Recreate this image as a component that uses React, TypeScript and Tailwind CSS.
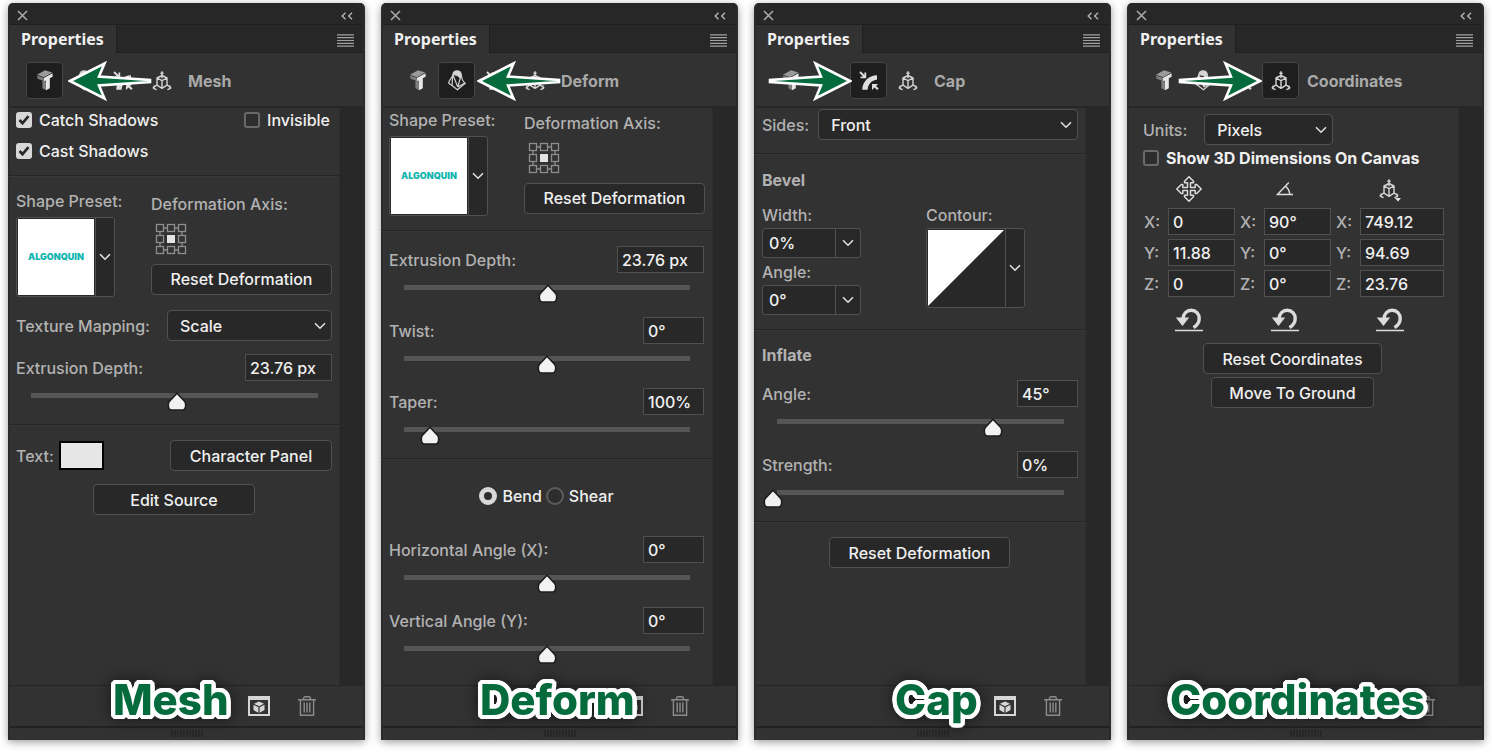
import { useId, useState } from "react";
import type { ReactNode } from "react";

/* ---------- icons ---------- */

function ExtrudeIcon() {
  return (
    <svg width="16" height="21" viewBox="0 0 16 21" aria-hidden="true">
      <path d="M0 4.8 8 .3l7.3 2.2L7 7.2Z" fill="#9a9a9a" />
      <path d="M0 5.4 6.6 7.8v3.3L.6 8.8Z" fill="#7d7d7d" />
      <path d="M5.4 10.8 9 11.6v8.7l-3.6-2Z" fill="#7d7d7d" />
      <path d="M6.8 7.9 15.6 3.2v3.5l-2.8 1.5v10L9 20.3v-9.9l-2.2.9Z" fill="#e6e6e6" />
    </svg>
  );
}

function DeformIcon() {
  return (
    <svg width="18" height="21" viewBox="0 0 18 21" fill="none" stroke="#d0d0d0" strokeWidth="1.2" strokeLinejoin="round" aria-hidden="true">
      <path d="M4.8 4.5C5.3 1.700 7 .8 9 .8c2.300 0 4 1.300 4.300 3.700L12 7.500 9.500 5.500Z" fill="#d6d6d6" />
      <path d="M4.800 4.500C4.500 8 .9 9.500.7 13.200L4 15.500l5.400 4.300 7.900-6.600C14.500 11.500 13.600 9 13.300 4.500" />
      <path d="M4.800 4.500 4 15.500M4.800 4.500 9.800 17M9.800 17l3.500-12.500M9.800 17l7-4" />
    </svg>
  );
}

function CapIcon() {
  return (
    <svg width="20" height="20" viewBox="0 0 20 20" aria-hidden="true">
      <path d="M3.200 18.800C3.600 10.500 9.500 4.400 18 4.200v4.600C12.800 9.200 9 13 8.600 18.800Z" fill="#dedede" />
      <path d="M1 1l4.500 4.500M6.300 1.600v4.700H1.600" fill="none" stroke="#dedede" strokeWidth="1.800" />
      <path d="M13 13h6l-1.900 1.900 2.600 2.600-1.600 1.600-2.600-2.600L13 19Z" fill="#dedede" />
    </svg>
  );
}

function AxisCubeIcon() {
  return (
    <svg width="20" height="20" viewBox="0 0 20 20" fill="none" stroke="#d6d6d6" strokeWidth="1.400" strokeLinejoin="round" aria-hidden="true">
      <path d="M10 4.500 15 7v7.200L10 17.300 5 14.200V7ZM5 7l5 2.600L15 7M10 9.600v7.700" />
      <path d="M10 .3v7M5 13.800.7 17.200M15 13.800l4.300 3.400M2 14.500v3.200l2.600 1M18 14.500v3.200l-2.600 1M8.400 2.200h3.200" />
    </svg>
  );
}

function MoveIcon() {
  return (
    <svg width="26" height="26" viewBox="0 0 26 26" fill="none" stroke="#dcdcdc" strokeWidth="1.500" strokeLinejoin="round" aria-hidden="true">
      <path d="m13 .8 4.500 4.500v1.500h-3v4.700h4.700v-3h1.500l4.500 4.500-4.500 4.500h-1.500v-3h-4.700v4.700h3v1.500L13 25.200l-4.500-4.500v-1.500h3v-4.700H6.800v3H5.300L.8 13l4.500-4.500h1.500v3h4.700V6.800h-3V5.300Z" />
    </svg>
  );
}

function AngleIcon() {
  return (
    <svg width="18" height="26" viewBox="0 0 18 26" fill="none" stroke="#dcdcdc" strokeWidth="1.400" aria-hidden="true">
      <path d="M12.800 6.500 1.500 18.500H17M9.200 10.200c2.800 1.800 4.300 4.700 4.500 8.200" />
    </svg>
  );
}

function ScaleIcon() {
  return (
    <span className="flex h-full items-center">
      <AxisCubeIcon />
      <svg className="-ml-1 self-end" width="6" height="4" viewBox="0 0 6 4" aria-hidden="true">
        <path d="M0 0h6L3 3.600Z" fill="#e6e6e6" />
      </svg>
    </span>
  );
}

function UndoIcon() {
  return (
    <svg width="28" height="24" viewBox="0 0 28 24" aria-hidden="true">
      <path d="M7.800 11.500C8.200 5.600 11.700 2.300 16.200 2.300c4.700 0 8 3.400 8 8.100 0 4-2.300 7-5.700 9.200" fill="none" stroke="#dcdcdc" strokeWidth="3.400" />
      <path d="M.8 9.500h13.400L7.500 18Z" fill="#dcdcdc" />
      <path d="M0 22.500h28" stroke="#dcdcdc" strokeWidth="1.500" />
    </svg>
  );
}

function Chevron() {
  return (
    <svg width="12" height="8" viewBox="0 0 12 8" fill="none" stroke="#e0e0e0" strokeWidth="1.600" aria-hidden="true">
      <path d="m1 1.200 5 5 5-5" />
    </svg>
  );
}

function RenderIcon() {
  return (
    <svg width="22" height="20" viewBox="0 0 22 20" aria-hidden="true">
      <path d="M1 2h20v17H1Z" fill="none" stroke="#d6d6d6" strokeWidth="2" />
      <path d="M0 0h22v4H0Z" fill="#d6d6d6" />
      <path d="m11 5.500 5 2.300-5 2.400-5-2.400ZM5.500 8.800l4.900 2.400v5.600l-4.900-2.700ZM16.500 8.800l-4.900 2.400v5.600l4.900-2.700Z" fill="#d6d6d6" />
    </svg>
  );
}

function TrashIcon() {
  return (
    <svg width="18" height="20" viewBox="0 0 18 20" fill="none" stroke="#8c8c8c" strokeWidth="1.400" aria-hidden="true">
      <path d="M0 3.700h18M2.400 3.700v15.500h13.200V3.700M5.500 3.500c0-1.800.6-2.700 1.800-2.700h3.400c1.200 0 1.800.9 1.800 2.700M6.200 6.500v10M9 6.500v10M11.800 6.500v10" />
    </svg>
  );
}

function AxisGrid() {
  const cells = [0, 11, 22];
  return (
    <svg width="32" height="32" viewBox="0 0 32 32" fill="none" stroke="#8e8e8e" strokeWidth="1.300" aria-hidden="true">
      {cells.flatMap((y) =>
        cells.map((x) =>
          x === 11 && y === 11 ? (
            <rect key="mid" x="12" y="12" width="8" height="8" fill="#e4e4e4" stroke="none" />
          ) : (
            <rect key={`${x}-${y}`} x={x + 1.5} y={y + 1.5} width="7" height="7" />
          ),
        ),
      )}
      <path d="M8.500 5h4M19.500 5h4M8.500 27h4M19.500 27h4M5 8.500v4M5 19.500v4M27 8.500v4M27 19.500v4" />
    </svg>
  );
}

function Arrow({ flip = false }: { flip?: boolean }) {
  return (
    <svg width="84" height="40" viewBox="0 0 84 40" aria-hidden="true">
      <path
        d={
          flip
            ? "M82 20 47.500 2.500 53 15.500 2 19v2l51 3.500-5.500 13Z"
            : "M2 20 36.500 2.500 31 15.500 82 19v2l-51 3.500 5.500 13Z"
        }
        fill="#056b3d"
        stroke="#fff"
        strokeWidth="2.600"
      />
    </svg>
  );
}

/* ---------- controls ---------- */

function Button({ children, className = "" }: { children: ReactNode; className?: string }) {
  return (
    <button
      type="button"
      className={`h-[31px] rounded border border-[#505050] bg-[#282828] font-medium text-[#f0f0f0] ${className}`}
    >
      {children}
    </button>
  );
}

function Select({ id, label, options, className = "" }: { id: string; label: string; options: string[]; className?: string }) {
  return (
    <span className={`grid items-center ${className}`}>
      <select
        id={id}
        aria-label={label}
        className="col-start-1 row-start-1 h-[31px] w-full appearance-none rounded border border-[#505050] bg-[#282828] pl-3 font-medium text-[#f0f0f0]"
      >
        {options.map((o) => (
          <option key={o}>{o}</option>
        ))}
      </select>
      <span className="pointer-events-none col-start-1 row-start-1 mr-[6px] justify-self-end">
        <Chevron />
      </span>
    </span>
  );
}

function Check({ label, on = false, bold = false }: { label: string; on?: boolean; bold?: boolean }) {
  const [checked, setChecked] = useState(on);
  return (
    <label className={`flex h-5 items-center gap-[7px] text-[#f0f0f0] ${bold ? "font-bold" : "font-medium"}`}>
      <span className="grid size-4 place-items-center">
        <input
          type="checkbox"
          checked={checked}
          onChange={() => setChecked(!checked)}
          className="col-start-1 row-start-1 size-4 appearance-none rounded-[3px] border-2 border-[#6a6a6a] bg-[#2d2d2d] checked:border-[#d8d8d8] checked:bg-[#d8d8d8]"
        />
        {checked && (
          <svg className="pointer-events-none col-start-1 row-start-1" width="12" height="12" viewBox="0 0 12 12" fill="none" stroke="#282828" strokeWidth="2.600" aria-hidden="true">
            <path d="m1.500 6 3 3.200 6-7" />
          </svg>
        )}
      </span>
      {label}
    </label>
  );
}

function Field({ id, label, value, className = "" }: { id?: string; label?: string; value: string; className?: string }) {
  return (
    <input
      id={id}
      aria-label={label}
      type="text"
      defaultValue={value}
      className={`h-[27px] border border-[#505050] bg-[#282828] pl-1 text-[#f0f0f0] ${className}`}
    />
  );
}

function SliderRow({ label, value, percent, wide = false }: { label: string; value: string; percent: number; wide?: boolean }) {
  const id = useId();
  const [pos, setPos] = useState(percent);
  return (
    <div>
      <div className="flex items-center justify-between">
        <label htmlFor={id}>{label}</label>
        <Field id={id} value={value} className={wide ? "w-[87px]" : "w-[61px]"} />
      </div>
      <div className="relative mt-3 mr-[10px] ml-[11px] h-[19px]">
        <div className="mx-1 h-[5px] bg-[#555555]" />
        <svg
          className="absolute -top-px -translate-x-1/2"
          style={{ left: `${pos}%` }}
          width="20"
          height="20"
          viewBox="0 0 20 20"
          aria-hidden="true"
        >
          <path d="M10 1.200 17.500 9.300c1 1.200 1.200 2 1.200 3.500 0 3.500-1 5.200-3.200 5.200h-11c-2.200 0-3.200-1.700-3.200-5.200 0-1.500.2-2.300 1.200-3.500Z" fill="#f2f2f2" stroke="#1e1e1e" strokeWidth="1.600" />
        </svg>
        <input
          type="range"
          aria-label={label}
          min={0}
          max={100}
          step="any"
          value={pos}
          onChange={(e) => setPos(Number(e.target.value))}
          className="absolute inset-0 w-full opacity-0"
        />
      </div>
    </div>
  );
}

function Combo({ label, value }: { label: string; value: string }) {
  const id = useId();
  return (
    <div>
      <label htmlFor={id} className="block h-5">
        {label}
      </label>
      <div className="mt-[3px] flex h-[30px] w-[99px] rounded-[3px] border border-[#505050] bg-[#282828]">
        <input id={id} type="text" defaultValue={value} className="w-0 grow bg-transparent pl-[6px] text-[#f0f0f0]" />
        <button type="button" aria-label={`${label} presets`} className="grid w-[25px] place-items-center border-l border-[#505050]">
          <Chevron />
        </button>
      </div>
    </div>
  );
}

function Swatch({ label, children }: { label: string; children: ReactNode }) {
  return (
    <button type="button" aria-label={label} className="flex h-[80px] w-[99px] rounded-[3px] border border-[#505050] bg-[#282828]">
      <span className="p-px">{children}</span>
      <span className="grid h-full grow place-items-center border-l border-[#505050]">
        <Chevron />
      </span>
    </button>
  );
}

function Section({ children, className = "" }: { children: ReactNode; className?: string }) {
  return (
    <section className={`border-t border-b border-t-[#383838] border-b-[#252525] pl-2 first:border-t-0 last:border-b-0 ${className}`}>
      {children}
    </section>
  );
}

function ShapePreset() {
  return (
    <div className="flex items-center justify-between">
      <div>
        <div className="flex h-6 items-center">Shape Preset:</div>
        <div className="mt-1">
          <Swatch label="Shape preset">
            <span className="grid size-[76px] place-items-center bg-white text-[9px] font-black text-[#12b5b0]">ALGONQUIN</span>
          </Swatch>
        </div>
      </div>
      <div className="w-[181px]">
        <div className="flex h-6 items-center">Deformation Axis:</div>
        <div className="mt-[7px] ml-1">
          <AxisGrid />
        </div>
        <Button className="mt-[9px] w-full">Reset Deformation</Button>
      </div>
    </div>
  );
}

/* ---------- panel frame ---------- */

const tools = [
  { name: "Mesh", icon: <ExtrudeIcon /> },
  { name: "Deform", icon: <DeformIcon /> },
  { name: "Cap", icon: <CapIcon /> },
  { name: "Coordinates", icon: <AxisCubeIcon /> },
];

function Panel({ name, arrow, flip, caption, children }: { name: string; arrow: string; flip?: boolean; caption: string; children: ReactNode }) {
  return (
    <article className="relative flex flex-col rounded-t-[5px] border-x-2 border-[#2b2b2b] bg-[#323232] shadow-[0_2px_8px_rgba(0,0,0,0.4)]">
      <header className="rounded-t-[4px] bg-[#272727]">
        <div className="flex h-[22px] items-center justify-between border-b border-[#1f1f1f] pt-1 pr-[10px] pl-[7px]">
          <button type="button" aria-label="Close">
            <svg width="11" height="11" viewBox="0 0 11 11" stroke="#a8a8a8" strokeWidth="1.600" aria-hidden="true">
              <path d="m1 1 9 9M10 1 1 10" />
            </svg>
          </button>
          <button type="button" aria-label="Collapse">
            <svg width="12" height="8" viewBox="0 0 12 8" fill="none" stroke="#b4b4b4" strokeWidth="1.400" aria-hidden="true">
              <path d="M4.500.8 1.200 4l3.300 3.200M11 .8 7.700 4 11 7.200" />
            </svg>
          </button>
        </div>
        <div className="flex h-[28px] items-center justify-between">
          <h2 className="flex h-full items-center border-r border-[#1f1f1f] bg-[#323232] pr-3 pl-[11px] font-['Noto_Sans',sans-serif] text-base font-bold text-[#f0f0f0]">
            Properties
          </h2>
          <div className="flex h-full grow items-center justify-end border-b border-[#1f1f1f] pt-[3px] pr-[9px]">
            <button type="button" aria-label="Panel menu">
              <svg width="17" height="13" viewBox="0 0 17 13" stroke="#a0a0a0" strokeWidth="1.200" aria-hidden="true">
                <path d="M0 .8h17M0 3.600h17M0 6.500h17M0 9.400h17M0 12.200h17" />
              </svg>
            </button>
          </div>
        </div>
      </header>

      <div className="relative flex items-center gap-[2px] border-b-2 border-[#272727] px-4 pt-[9px] pb-[7px]">
        {tools.map((t) => (
          <button
            key={t.name}
            type="button"
            aria-label={t.name}
            className={`grid size-[37px] place-items-center rounded-sm border ${
              t.name === name ? "border-[#454545] bg-[#1e1e1e]" : "border-transparent"
            }`}
          >
            {t.icon}
          </button>
        ))}
        <span className={`pointer-events-none absolute top-2 ${arrow}`}>
          <Arrow flip={flip} />
        </span>
        <span className="relative ml-[6px] font-bold text-[#a9a9a9]">{name}</span>
      </div>

      <div className="flex grow">
        <div className="-ml-0.5 grow">{children}</div>
        <div className="w-6 border-l border-[#2d2d2d] bg-[#282828]" />
      </div>

      <footer>
        <div className="flex h-[41px] items-center justify-end gap-[28px] border-t border-[#252525] pr-[47px]">
          <button type="button" aria-label="Render">
            <RenderIcon />
          </button>
          <button type="button" aria-label="Delete">
            <TrashIcon />
          </button>
        </div>
        <div className="flex h-[14px] items-start justify-center border-t-2 border-[#222222] pt-[2px]">
          <svg width="32" height="7" viewBox="0 0 32 7" stroke="#222222" strokeWidth="1.200" aria-hidden="true">
            <path d="M1 0v7M4 0v7M7 0v7M10 0v7M13 0v7M16 0v7M19 0v7M22 0v7M25 0v7M28 0v7M31 0v7" />
          </svg>
        </div>
      </footer>

      <strong
        className={`pointer-events-none absolute bottom-[15px] text-[42px] leading-[50px] font-extrabold text-[#056b3d] [text-shadow:4px_0_white,-4px_0_white,0_4px_white,0_-4px_white,4px_1px_white,4px_-1px_white,-4px_1px_white,-4px_-1px_white,1px_4px_white,-1px_4px_white,1px_-4px_white,-1px_-4px_white,4px_2px_white,4px_-2px_white,-4px_2px_white,-4px_-2px_white,2px_4px_white,-2px_4px_white,2px_-4px_white,-2px_-4px_white,3px_3px_white,3px_-3px_white,-3px_3px_white,-3px_-3px_white,2px_2px_white,2px_-2px_white,-2px_2px_white,-2px_-2px_white] drop-shadow-[0_0_8px_rgba(0,0,0,0.5)] ${caption}`}
      >
        {name}
      </strong>
    </article>
  );
}

const axes = [
  { name: "Position", icon: <MoveIcon />, values: ["0", "11.88", "0"] },
  { name: "Rotation", icon: <AngleIcon />, values: ["90°", "0°", "0°"] },
  { name: "Scale", icon: <ScaleIcon />, values: ["749.12", "94.69", "23.76"] },
];

export default function App() {
  return (
    <main className="grid min-h-screen grid-cols-4 gap-4 bg-white px-2 pt-[3px] pb-3 font-['Inter','Liberation_Sans',sans-serif] text-base leading-5 text-[#b2b2b2]">
      <Panel name="Mesh" arrow="left-[58px]" caption="left-[103px]">
        <Section className="pt-[2px] pr-[9px] pb-[14px]">
          <div className="flex justify-between">
            <Check label="Catch Shadows" on />
            <Check label="Invisible" />
          </div>
          <div className="mt-[11px] flex">
            <Check label="Cast Shadows" on />
          </div>
        </Section>
        <Section className="pt-3 pr-[7px] pb-3 font-medium">
          <ShapePreset />
          <div className="mt-[13px] flex items-center justify-between">
            <label htmlFor="texture">Texture Mapping:</label>
            <Select id="texture" label="Texture Mapping" options={["Scale", "Tile"]} className="w-[165px]" />
          </div>
          <div className="mt-[13px]">
            <SliderRow label="Extrusion Depth:" value="23.76 px" percent={50.8} wide />
          </div>
        </Section>
        <Section className="pt-[14px] pr-[7px] font-medium">
          <div className="flex items-center">
            <label htmlFor="text-color">Text:</label>
            <button id="text-color" type="button" aria-label="Text color" className="ml-[5px] h-[29px] w-[45px] border-2 border-black bg-[#e6e6e6]" />
            <Button className="ml-auto w-[162px]">Character Panel</Button>
          </div>
          <div className="mt-[13px] flex justify-center">
            <Button className="w-[162px]">Edit Source</Button>
          </div>
        </Section>
      </Panel>

      <Panel name="Deform" arrow="left-[94px]" caption="left-[97px]">
        <Section className="pr-[7px] pb-[14px] font-medium">
          <ShapePreset />
        </Section>
        <Section className="flex flex-col gap-[13px] pt-[14px] pr-2 pb-3 font-medium">
          <SliderRow label="Extrusion Depth:" value="23.76 px" percent={50.5} wide />
          <SliderRow label="Twist:" value="0°" percent={50} />
          <SliderRow label="Taper:" value="100%" percent={10.2} />
        </Section>
        <Section className="flex flex-col gap-[13px] pt-[26px] pr-2 font-medium">
          <div className="mb-[17px] flex justify-center gap-1 text-[#f0f0f0]">
            {["Bend", "Shear"].map((mode) => (
              <label key={mode} className="flex items-center gap-[5px]">
                <input
                  type="radio"
                  name="deform-mode"
                  defaultChecked={mode === "Bend"}
                  className="size-[18px] appearance-none rounded-full border-2 border-[#5c5c5c] bg-[#2d2d2d] checked:border-[5px] checked:border-[#d8d8d8]"
                />
                {mode}
              </label>
            ))}
          </div>
          <SliderRow label="Horizontal Angle (X):" value="0°" percent={50} />
          <SliderRow label="Vertical Angle (Y):" value="0°" percent={50} />
        </Section>
      </Panel>

      <Panel name="Cap" arrow="left-[12px]" flip caption="left-[139px]">
        <Section className="flex items-center gap-[9px] pt-px pr-[7px] pb-[13px] font-medium">
          <label htmlFor="sides">Sides:</label>
          <Select id="sides" label="Sides" options={["Front", "Back", "Front and Back"]} className="grow" />
        </Section>
        <Section className="pt-[15px] pr-[7px] pb-[14px] font-medium">
          <h3 className="font-bold">Bevel</h3>
          <div className="mt-[15px] flex">
            <div className="flex w-[164px] flex-col gap-1">
              <Combo label="Width:" value="0%" />
              <Combo label="Angle:" value="0°" />
            </div>
            <div>
              <div className="mb-[3px] h-5">Contour:</div>
              <Swatch label="Contour">
                <svg width="76" height="76" viewBox="0 0 76 76" aria-hidden="true">
                  <path d="M0 0h76L0 76Z" fill="#fff" />
                </svg>
              </Swatch>
            </div>
          </div>
        </Section>
        <Section className="flex flex-col gap-[13px] pt-[14px] pr-[7px] pb-3 font-medium">
          <h3 className="mb-[2px] font-bold">Inflate</h3>
          <SliderRow label="Angle:" value="45°" percent={74.5} />
          <SliderRow label="Strength:" value="0%" percent={0} />
        </Section>
        <Section className="flex justify-center pt-[14px] pr-2">
          <Button className="w-[181px]">Reset Deformation</Button>
        </Section>
      </Panel>

      <Panel name="Coordinates" arrow="left-[49px]" flip caption="left-[41px]">
        <Section className="pt-[6px] pr-2 font-medium">
          <div className="flex items-center gap-[17px] pl-2">
            <label htmlFor="units">Units:</label>
            <Select id="units" label="Units" options={["Pixels", "Inches", "Centimeters"]} className="w-[129px]" />
          </div>
          <div className="mt-[3px] pl-2">
            <Check label="Show 3D Dimensions On Canvas" bold />
          </div>
          <div className="mt-2 flex gap-1 pl-2">
            {axes.map((axis) => (
              <div key={axis.name} role="group" aria-label={axis.name}>
                <div className="mb-[6px] flex h-[26px] items-center justify-center">{axis.icon}</div>
                <div className="flex flex-col gap-1">
                  {["X", "Y", "Z"].map((dim, i) => (
                    <label key={dim} className="flex items-center">
                      <span className="w-[25px] pl-px">{dim}:</span>
                      <Field value={axis.values[i]} className={axis.name === "Scale" ? "w-[84px]" : "w-[67px]"} />
                    </label>
                  ))}
                </div>
                <div className="mt-[11px] flex justify-center">
                  <button type="button" aria-label={`Reset ${axis.name}`}>
                    <UndoIcon />
                  </button>
                </div>
              </div>
            ))}
          </div>
          <div className="mt-[11px] flex flex-col items-center gap-[3px]">
            <Button className="w-[179px]">Reset Coordinates</Button>
            <Button className="w-[163px]">Move To Ground</Button>
          </div>
        </Section>
      </Panel>
    </main>
  );
}
